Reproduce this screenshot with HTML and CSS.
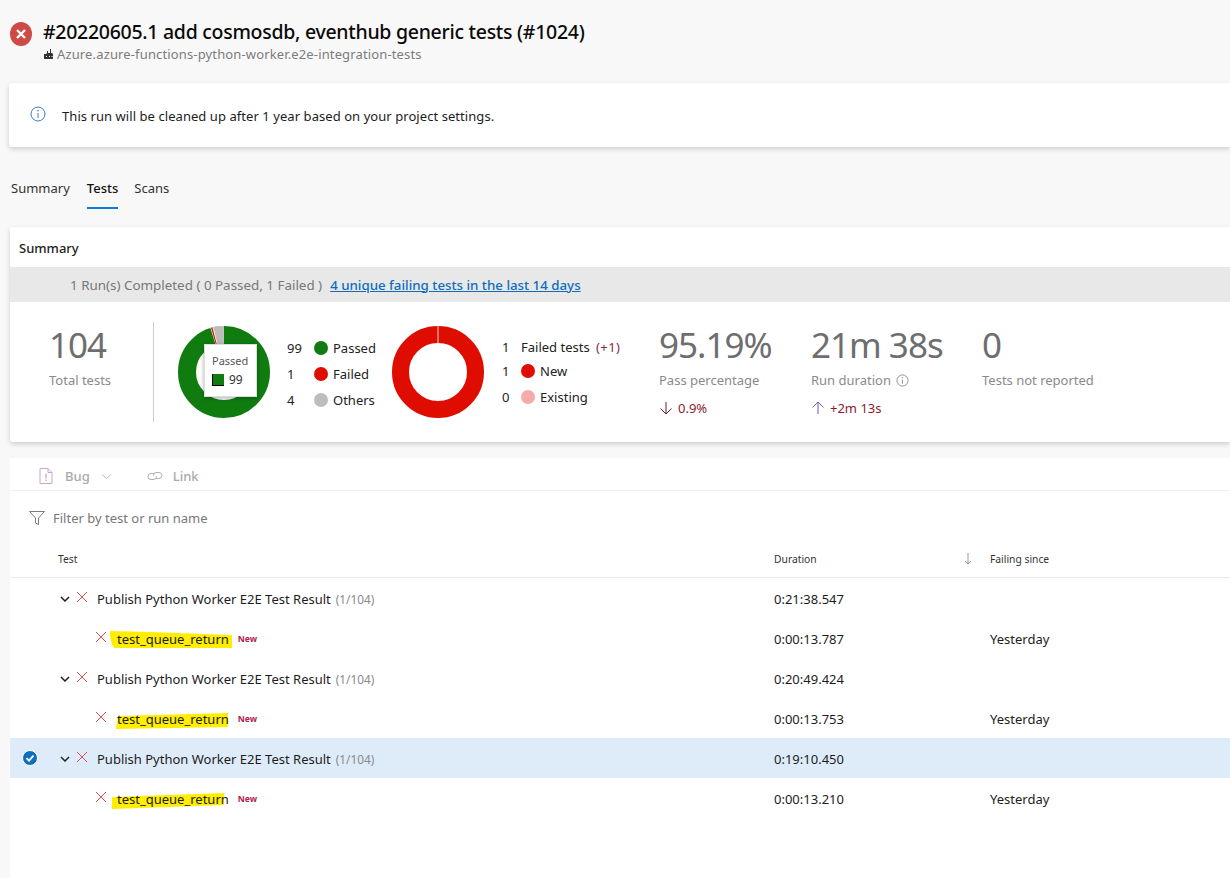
FILE: index.html
```html
<!DOCTYPE html>
<html lang="en">
<head>
<meta charset="utf-8">
<title>Test run</title>
<link rel="stylesheet" href="styles.css">
</head>
<body>
<header class="page-head">
  <svg class="status-icon" viewBox="0 0 22 24"><ellipse cx="11" cy="12" rx="11" ry="12" fill="#cd4a45"/><path d="M7 8l8 8M15 8l-8 8" stroke="#fff" stroke-width="2.4" fill="none"/></svg>
  <div class="head-text">
    <h1 class="title">#20220605.1 add cosmosdb, eventhub generic tests (#1024)</h1>
    <div class="subtitle"><svg class="pipe-icon" viewBox="0 0 12 12"><path d="M1 11V6h2l1-1V3h1v2h2V1h1v4h1l1 1h0v5z" fill="#333"/><path d="M3 8h1v1H3zM6 8h1v1H6zM8.500 8h1v1h-1z" fill="#fff"/></svg>Azure.azure-functions-python-worker.e2e-integration-tests</div>
  </div>
</header>

<section class="banner">
  <svg class="info-icon" viewBox="0 0 16 16"><circle cx="8" cy="8" r="7" fill="none" stroke="#3f78c8" stroke-width="1"/><path d="M8 7v5" stroke="#3f78c8"/><circle cx="8" cy="4.800" r=".8" fill="#3f78c8"/></svg>
  <span>This run will be cleaned up after 1 year based on your project settings.</span>
</section>

<nav class="tabs">
  <span class="tab">Summary</span>
  <span class="tab active">Tests</span>
  <span class="tab">Scans</span>
</nav>

<section class="summary card">
  <h2 class="summary-title">Summary</h2>
  <div class="run-band">
    <span>1 Run(s) Completed ( 0 Passed, 1 Failed )</span>
    <a class="band-link" href="#">4 unique failing tests in the last 14 days</a>
  </div>
  <div class="stats">
    <div class="stat total">
      <div class="big">104</div>
      <div class="label">Total tests</div>
    </div>
    <div class="divider"></div>
    <div class="donut">
      <svg viewBox="0 0 92 92">
        <g fill="none" stroke-width="18" transform="rotate(-90 46 46)">
          <circle cx="46" cy="46" r="37" stroke="#107c10"/>
          <circle cx="46" cy="46" r="37" stroke="#fff" stroke-dasharray="11.500 221" stroke-dashoffset="11.500"/>
          <circle cx="46" cy="46" r="37" stroke="#bdbdbd" stroke-dasharray="8.500 224" stroke-dashoffset="9"/>
          <circle cx="46" cy="46" r="37" stroke="#e00b00" stroke-dasharray="1.200 231.300" stroke-dashoffset="11"/>
        </g>
      </svg>
      <div class="tooltip">
        <div>Passed</div>
        <div class="tip-row"><span class="tip-swatch"></span>99</div>
      </div>
    </div>
    <div class="legend first">
      <span>99</span><span class="dot green"></span><span>Passed</span>
      <span>1</span><span class="dot red"></span><span>Failed</span>
      <span>4</span><span class="dot grey"></span><span>Others</span>
    </div>
    <div class="donut second">
      <svg viewBox="0 0 92 92">
        <circle cx="46" cy="46" r="37.500" fill="none" stroke="#de0d00" stroke-width="17"/>
        <path d="M46 0v17" stroke="#f3d6d4" stroke-width="1"/>
      </svg>
    </div>
    <div class="legend second-legend">
      <span>1</span><span class="legend-wide">Failed tests <em class="delta">(+1)</em></span>
      <span>1</span><span class="dot red"></span><span>New</span>
      <span>0</span><span class="dot pink"></span><span>Existing</span>
    </div>
    <div class="stat pct">
      <div class="big">95.19%</div>
      <div class="label">Pass percentage</div>
      <div class="trend"><svg class="arrow" viewBox="0 0 14 14"><path d="M7 1v12M1.500 7.500L7 13l5.500-5.500" fill="none" stroke="#6b1f2e"/></svg><span>0.9%</span></div>
    </div>
    <div class="stat dur">
      <div class="big">21m 38s</div>
      <div class="label">Run duration <svg class="mini-info" viewBox="0 0 14 14"><circle cx="7" cy="7" r="6" fill="none" stroke="#8a8a8a"/><path d="M7 6v4.500" stroke="#8a8a8a"/><circle cx="7" cy="4" r=".7" fill="#8a8a8a"/></svg></div>
      <div class="trend"><svg class="arrow" viewBox="0 0 14 14"><path d="M7 13V1M1.500 6.500L7 1l5.500 5.500" fill="none" stroke="#7b5ea8"/></svg><span>+2m 13s</span></div>
    </div>
    <div class="stat rep">
      <div class="big">0</div>
      <div class="label">Tests not reported</div>
    </div>
  </div>
</section>

<section class="results">
  <div class="toolbar">
    <span class="tool"><svg class="tool-icon" viewBox="0 0 14 16"><path d="M1 .5h8l4 4v11H1zM9 .5v4h4" fill="none" stroke="#c9a6cf"/><path d="M7 5.500v5M7 11.500v1.500" stroke="#d08aa0"/></svg>Bug<svg class="tool-caret" viewBox="0 0 12 8"><path d="M1 1.500l5 5 5-5" fill="none" stroke="#b0b0b0"/></svg></span>
    <span class="tool link-tool"><svg class="link-icon" viewBox="0 0 18 12"><path d="M8 3.500H5a3 3 0 0 0 0 6h3a3 3 0 0 0 2.500-3M10 8.500h3a3 3 0 0 0 0-6h-3a3 3 0 0 0-2.500 3" fill="none" stroke="#b0b0b0"/></svg>Link</span>
  </div>
  <div class="filter">
    <svg class="funnel" viewBox="0 0 16 14"><path d="M.5.500h15L9.500 7v6.500l-3-1.500V7z" fill="none" stroke="#7a7a8a"/></svg>
    <span>Filter by test or run name</span>
  </div>
  <div class="row head-row">
    <div class="head-test">Test</div>
    <div class="head-duration">Duration<svg class="sort" viewBox="0 0 8 12"><path d="M4 0v11M1 8l3 3 3-3" fill="none" stroke="#9a9a9a"/></svg></div>
    <div>Failing since</div>
  </div>

  <div class="row group">
    <div class="name-cell"><svg class="chev" viewBox="0 0 10 6"><path d="M1 1l4 4 4-4" fill="none" stroke="#222" stroke-width="1.500"/></svg><svg class="cross" viewBox="0 0 12 12"><path d="M1 1l10 10M11 1L1 11" stroke="#d9534f" fill="none"/></svg><span>Publish Python Worker E2E Test Result</span><span class="count">(1/104)</span></div>
    <div>0:21:38.547</div><div></div>
  </div>
  <div class="row child">
    <div class="name-cell"><svg class="cross" viewBox="0 0 12 12"><path d="M1 1l10 10M11 1L1 11" stroke="#d9534f" fill="none"/></svg><span class="marked"><svg class="marker m1" viewBox="0 0 122 19" preserveAspectRatio="none"><path d="M0 1L40 2L122 5V18H4Q0 12 0 1Z" fill="#ffee00"/></svg><span class="marked-text">test_queue_return</span></span><span class="badge">New</span></div>
    <div>0:00:13.787</div><div>Yesterday</div>
  </div>

  <div class="row group">
    <div class="name-cell"><svg class="chev" viewBox="0 0 10 6"><path d="M1 1l4 4 4-4" fill="none" stroke="#222" stroke-width="1.500"/></svg><svg class="cross" viewBox="0 0 12 12"><path d="M1 1l10 10M11 1L1 11" stroke="#d9534f" fill="none"/></svg><span>Publish Python Worker E2E Test Result</span><span class="count">(1/104)</span></div>
    <div>0:20:49.424</div><div></div>
  </div>
  <div class="row child">
    <div class="name-cell"><svg class="cross" viewBox="0 0 12 12"><path d="M1 1l10 10M11 1L1 11" stroke="#d9534f" fill="none"/></svg><span class="marked"><svg class="marker m2" viewBox="0 0 112 16" preserveAspectRatio="none"><path d="M2 3L112 0V14L0 16Z" fill="#ffee00"/></svg><span class="marked-text">test_queue_return</span></span><span class="badge">New</span></div>
    <div>0:00:13.753</div><div>Yesterday</div>
  </div>

  <div class="row group selected">
    <svg class="check" viewBox="0 0 16 16"><circle cx="8" cy="8" r="7.500" fill="#106ebe" stroke="#fff"/><path d="M4.500 8.200l2.500 2.500 4.500-5" fill="none" stroke="#fff" stroke-width="1.800"/></svg>
    <div class="name-cell"><svg class="chev" viewBox="0 0 10 6"><path d="M1 1l4 4 4-4" fill="none" stroke="#222" stroke-width="1.500"/></svg><svg class="cross" viewBox="0 0 12 12"><path d="M1 1l10 10M11 1L1 11" stroke="#d9534f" fill="none"/></svg><span>Publish Python Worker E2E Test Result</span><span class="count">(1/104)</span></div>
    <div>0:19:10.450</div><div></div>
  </div>
  <div class="row child">
    <div class="name-cell"><svg class="cross" viewBox="0 0 12 12"><path d="M1 1l10 10M11 1L1 11" stroke="#d9534f" fill="none"/></svg><span class="marked"><svg class="marker m3" viewBox="0 0 112 16" preserveAspectRatio="none"><path d="M0 4L112 0V12L0 16Z" fill="#ffee00"/></svg><span class="marked-text">test_queue_return</span></span><span class="badge">New</span></div>
    <div>0:00:13.210</div><div>Yesterday</div>
  </div>
</section>
</body>
</html>
```
FILE: styles.css
```css
* { box-sizing: border-box; }
html, body { margin: 0; height: 100%; overflow: hidden; }
body {
  background: #f8f8f8;
  font-family: "Noto Sans", "Open Sans", sans-serif;
  font-size: 13px;
  color: #1c1c1c;
}
.page-head { display: flex; align-items: flex-start; gap: 11px; padding: 19px 0 0 10px; height: 83px; }
.status-icon { width: 22px; height: 24px; margin-top: 3px; flex: none; }
.title { margin: 0; font-size: 19.500px; letter-spacing: -.28px; line-height: 26px; font-weight: 500; color: #0a0a0a; }
.subtitle { display: flex; align-items: center; font-size: 13px; letter-spacing: .14px; line-height: 18px; color: #7c7c7c; }
.pipe-icon { width: 12px; height: 12px; margin-right: 2px; }
.banner {
  display: flex; align-items: center; gap: 16px;
  height: 64px; margin-left: 9px; padding: 1px 0 0 21px;
  background: #fff; border-radius: 3px 0 0 3px;
  box-shadow: 0 2px 5px rgba(0,0,0,.18);
  letter-spacing: .06px;
}
.info-icon { width: 16px; height: 16px; margin-top: -3px; }
.tabs { display: flex; gap: 17px; height: 64px; margin-bottom: 16px; padding: 24px 0 0 11px; }
.tab { height: 38px; line-height: 34px; color: #333; }
.tab.active { color: #111; font-weight: 500; border-bottom: 2px solid #0f78d4; margin-right: -1px; }
.card { background: #fff; margin-left: 10px; }
.summary { height: 215px; border-radius: 3px 0 0 3px; box-shadow: 0 2px 5px rgba(0,0,0,.18); }
.summary-title { margin: 0; height: 40px; padding-left: 9px; font-size: 13px; line-height: 42px; font-weight: 500; color: #222; }
.run-band { display: flex; gap: 8px; align-items: center; height: 35px; padding-left: 60px; background: #e8e8e8; color: #777; font-size: 13.400px; }
.band-link { color: #0f6cbd; font-weight: 500; text-decoration: underline; font-size: 13.300px; }
.stats { display: flex; align-items: flex-start; height: 140px; padding: 20px 0 0 39px; }
.stat .big { font-size: 35px; letter-spacing: -1px; line-height: 44px; color: #6e6e6e; padding-top: 1px; }
.stat .label { color: #8a8a8a; margin-top: 4px; line-height: 18px; display: flex; align-items: center; gap: 5px; }
.total { width: 104px; }
.divider { width: 1px; height: 100px; background: #ccc; margin-right: 24px; }
.donut { position: relative; width: 92px; height: 92px; margin-top: 4px; flex: none; }
.donut svg { display: block; width: 92px; height: 92px; }
.tooltip {
  position: absolute; left: 26px; top: 18px; width: 53px; height: 53px;
  padding: 8px 0 0 7px; background: #fff; border: 1px solid #ddd;
  box-shadow: 0 1px 4px rgba(0,0,0,.35); font-size: 11px; color: #555; line-height: 16px;
}
.tip-row { display: flex; align-items: center; gap: 5px; margin-top: 3px; font-size: 12px; color: #333; }
.tip-swatch { width: 12px; height: 12px; background: #107c10; border-left: 1px solid #000; border-bottom: 1px solid #000; }
.legend { display: grid; align-items: center; grid-auto-rows: 26px; color: #222; flex: none; }
.legend.first { grid-template-columns: 27px 19px auto; margin: 13px 0 0 17px; width: 105px; }
.second-legend { grid-template-columns: 19px 19px auto; grid-template-rows: 23px 26px 26px; margin: 13px 0 0 18px; width: 157px; }
.second-legend .legend-wide { grid-column: 2 / 4; }
.delta { font-style: normal; color: #8b2a4a; margin-left: 3px; letter-spacing: .4px; }
.dot { width: 14px; height: 14px; border-radius: 50%; }
.green { background: #107c10; }
.red { background: #de0d00; }
.grey { background: #bdbdbd; }
.pink { background: #f4abab; }
.pct { width: 152px; }
.dur { width: 171px; }
.trend { display: flex; align-items: center; gap: 5px; margin-top: 10px; color: #8c1c2e; line-height: 18px; }
.arrow { width: 14px; height: 14px; }
.mini-info { width: 13px; height: 13px; }
.results { background: #fff; margin: 16px 0 0 10px; height: 420px; }
.toolbar { display: flex; align-items: center; gap: 34px; height: 33px; padding: 4px 0 0 29px; color: #aaa; font-weight: 500; border-bottom: 1px solid #f2f2f2; }
.tool { display: flex; align-items: center; }
.tool-icon { width: 14px; height: 16px; margin-right: 12px; }
.tool-caret { width: 11px; height: 7px; margin-left: 11px; }
.link-icon { width: 18px; height: 12px; margin-right: 9px; }
.filter { display: flex; align-items: center; gap: 8px; height: 50px; padding: 4px 0 0 19px; color: #777; }
.funnel { width: 16px; height: 14px; }
.row { position: relative; display: grid; grid-template-columns: 764px 216px 1fr; align-items: center; height: 40px; padding-top: 1px; }
.head-row { height: 37px; padding-top: 0; font-size: 10.300px; border-bottom: 1px solid #e8e8e8; color: #333; }
.head-test { padding-left: 48px; }
.head-duration { position: relative; }
.sort { position: absolute; right: 18px; top: 1px; width: 8px; height: 12px; }
.name-cell { display: flex; align-items: center; }
.group .name-cell { padding-left: 50px; }
.child .name-cell { padding-left: 85px; }
.chev { width: 10px; height: 6px; margin-right: 6px; }
.cross { width: 12px; height: 12px; margin-right: 9px; margin-top: -4px; flex: none; }
.group .cross { margin-right: 9px; }
.child .cross { margin-right: 10px; }
.count { color: #8a8a8a; font-size: 11.800px; margin-left: 5px; }
.marked { position: relative; }
.marker { position: absolute; display: block; }
.m1 { left: -7px; top: 0; width: 122px; height: 19px; }
.m2 { left: -1px; top: 3px; width: 112px; height: 16px; }
.m3 { left: -5px; top: 3px; width: 112px; height: 16px; }
.marked-text { position: relative; }
.badge { margin-left: 9px; font-size: 8.600px; font-weight: 700; color: #b3214d; }
.selected { background: #deecf9; }
.check { position: absolute; left: 12px; top: 12px; width: 16px; height: 16px; }
```
